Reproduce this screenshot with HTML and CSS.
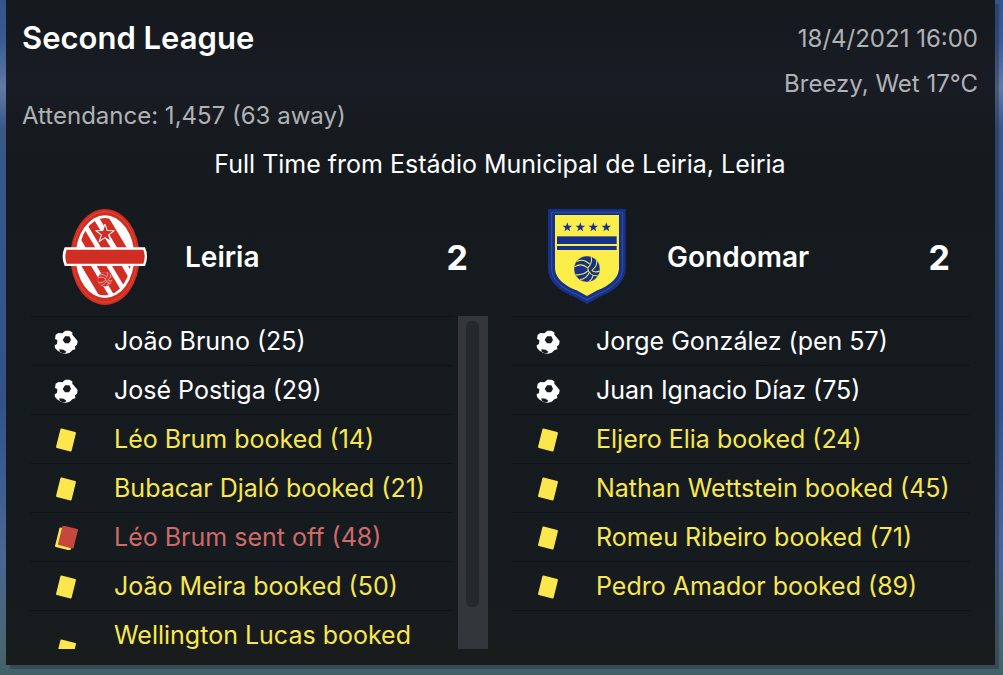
FILE: index.html
```html
<!DOCTYPE html>
<html lang="en">
<head>
  <meta charset="UTF-8">
  <meta name="viewport" content="width=device-width, initial-scale=1">
  <title>Leiria 2 - 2 Gondomar</title>
  <link rel="stylesheet" href="styles.css">
</head>
<body>

<!-- shared icons -->
<svg class="sprite" aria-hidden="true">
  <symbol id="goal" viewBox="0 0 72 72">
    <path fill="#fff" d="M5 14 L13 9 L25 10 L34 2 L46 2 L55 7 L55 14 L66 27 L71 34 L69 44 L63 49 L64 58 L56 60 L47 68 L36 71 L22 69 L11 62 L3 54 L2 46 L9 42 L10 30 L3 27 Z"/>
    <path fill="#171c20" d="M33 19 L46 19 L51 30 L45 40 L33 40 L26 30 Z"/>
    <path fill="#171c20" d="M16 58 L29 59 L37 65 L34 69 L24 69 L17 65 Z"/>
  </symbol>
  <symbol id="yellow" viewBox="0 0 24 24">
    <rect x="4" y="2" width="16" height="20" rx="1" fill="#fbe64d" transform="rotate(14 12 12)"/>
  </symbol>
  <symbol id="second-yellow" viewBox="0 0 24 24">
    <rect x="3" y="3" width="16" height="20" rx="1" fill="#f8e750" transform="rotate(14 11 13)"/>
    <rect x="6" y="1" width="16" height="20" rx="1" fill="#c4483e" transform="rotate(14 14 11)"/>
  </symbol>
  <symbol id="star" viewBox="-14 -14 28 28">
    <path d="M0 -14 L3.3 -4.5 L13.3 -4.3 L5.3 1.7 L8.2 11.3 L0 5.6 L-8.2 11.3 L-5.3 1.7 L-13.3 -4.3 L-3.3 -4.5 Z"/>
  </symbol>
  <symbol id="volleyball" viewBox="-40 -40 80 80">
    <circle r="38"/>
    <g fill="none" stroke-width="3">
      <path d="M2 -3 C-10 -14 -24 -14 -36 -7"/>
      <path d="M8 -14 C-4 -26 -18 -28 -29 -22"/>
      <path d="M2 -3 C12 -12 15 -24 12 -36"/>
      <path d="M14 4 C27 -5 30 -15 28 -25"/>
      <path d="M2 -3 C4 12 14 20 31 20"/>
      <path d="M14 4 C20 9 28 10 37 6"/>
      <path d="M3 5 C-6 15 -18 18 -33 17"/>
      <path d="M6 12 C0 24 -8 30 -20 31"/>
      <path d="M18 18 C16 28 12 33 5 37"/>
    </g>
  </symbol>
</svg>

<main class="match">
  <header class="match-header">
    <div>
      <h1>Second League</h1>
      <p class="attendance">Attendance: 1,457 (63 away)</p>
    </div>
    <div class="conditions">
      <p>18/4/2021 16:00</p>
      <p>Breezy, Wet 17°C</p>
    </div>
  </header>

  <p class="status">Full Time from Estádio Municipal de Leiria, Leiria</p>

  <div class="teams">
    <section class="team">
      <div class="team-header">
        <svg class="crest" viewBox="36 24 258 294" role="img" aria-label="Leiria crest">
          <clipPath id="oval"><ellipse cx="165" cy="170" rx="79" ry="116"/></clipPath>
          <ellipse cx="165" cy="171" rx="104" ry="144" fill="#d02d23"/>
          <ellipse cx="165" cy="171" rx="96" ry="136" fill="none" stroke="#e4593e" stroke-width="2"/>
          <ellipse cx="165" cy="170" rx="88" ry="124" fill="#fff"/>
          <g clip-path="url(#oval)" stroke="#d02d23" stroke-width="25">
            <path d="M2 20 L182 320"/>
            <path d="M48 20 L228 320"/>
            <path d="M94 20 L274 320"/>
            <path d="M142 20 L322 320"/>
          </g>
          <use href="#star" x="136" y="72" width="58" height="58" fill="#d02d23" stroke="#fff" stroke-width="1.5"/>
          <use href="#volleyball" x="142" y="215" width="46" height="46" fill="#d02d23" stroke="#fff"/>
          <path d="M44 142 H285 Q297 170 285 198 H44 Q32 170 44 142 Z" fill="#fff"/>
          <path d="M50 149 H280 Q288 170 280 191 H50 Q42 170 50 149 Z" fill="#d02d23"/>
        </svg>
        <h2>Leiria</h2>
        <span class="score">2</span>
      </div>
      <div class="scroller">
        <ul class="events">
          <li><svg><use href="#goal"/></svg><span>João Bruno (25)</span></li>
          <li><svg><use href="#goal"/></svg><span>José Postiga (29)</span></li>
          <li class="booked"><svg><use href="#yellow"/></svg><span>Léo Brum booked (14)</span></li>
          <li class="booked"><svg><use href="#yellow"/></svg><span>Bubacar Djaló booked (21)</span></li>
          <li class="sent-off"><svg><use href="#second-yellow"/></svg><span>Léo Brum sent off (48)</span></li>
          <li class="booked"><svg><use href="#yellow"/></svg><span>João Meira booked (50)</span></li>
          <li class="booked"><svg><use href="#yellow"/></svg><span>Wellington Lucas booked (68)</span></li>
        </ul>
        <div class="scrollbar"><div class="thumb"></div></div>
      </div>
    </section>

    <section class="team">
      <div class="team-header">
        <svg class="crest" viewBox="30 24 258 294" role="img" aria-label="Gondomar crest">
          <path d="M42 27 H275 V205 C275 250 232 277 196 291 L159 312 L122 291 C86 277 42 250 42 205 Z" fill="#16318c"/>
          <path d="M53 37 H265 V205 C265 243 228 268 192 282 L159 300 L126 282 C90 268 53 243 53 205 Z" fill="none" stroke="#536394" stroke-width="2"/>
          <path d="M63 45 H255 V203 C255 237 222 258 190 271 L159 288 L128 271 C96 258 63 237 63 203 Z" fill="#fbee4b"/>
          <g fill="#16318c">
            <use href="#star" x="85" y="67" width="30" height="30"/>
            <use href="#star" x="124" y="67" width="30" height="30"/>
            <use href="#star" x="163" y="67" width="30" height="30"/>
            <use href="#star" x="202" y="67" width="30" height="30"/>
            <rect x="69" y="109" width="179" height="23"/>
            <rect x="69" y="138" width="179" height="12"/>
          </g>
          <use href="#volleyball" x="118" y="166" width="82" height="82" fill="#16318c" stroke="#fbee4b"/>
        </svg>
        <h2>Gondomar</h2>
        <span class="score">2</span>
      </div>
      <div class="scroller">
        <ul class="events">
          <li><svg><use href="#goal"/></svg><span>Jorge González (pen 57)</span></li>
          <li><svg><use href="#goal"/></svg><span>Juan Ignacio Díaz (75)</span></li>
          <li class="booked"><svg><use href="#yellow"/></svg><span>Eljero Elia booked (24)</span></li>
          <li class="booked"><svg><use href="#yellow"/></svg><span>Nathan Wettstein booked (45)</span></li>
          <li class="booked"><svg><use href="#yellow"/></svg><span>Romeu Ribeiro booked (71)</span></li>
          <li class="booked"><svg><use href="#yellow"/></svg><span>Pedro Amador booked (89)</span></li>
        </ul>
      </div>
    </section>
  </div>
</main>

</body>
</html>
```

FILE: styles.css
```css
* {
  box-sizing: border-box;
}

body {
  margin: 0;
  height: 100vh;
  padding: 0 8px 10px 6px;
  display: flex;
  font: 25px/31px Inter, "Open Sans", sans-serif;
  color: #fff;
  background: linear-gradient(to bottom, #34548c 0, #3a5a92 6%, #627aa4 13%, #3a5788 19%, #34528a 60%, #4b6695 82%, #48656f 96%, #426068 100%);
}

h1, h2, p, ul {
  margin: 0;
  padding: 0;
}

.sprite {
  position: absolute;
  width: 0;
  height: 0;
}

.match {
  flex: 1;
  min-width: 0;
  display: flex;
  flex-direction: column;
  padding: 16px 25px 16px 24px;
  background: linear-gradient(to bottom, #14191e 0, #191c24 12%, #151a1e 24%, #161b20 85%, #191c1c 100%);
  box-shadow: 4px 4px 0 rgba(30, 35, 50, 0.35);
}

.match-header {
  display: flex;
  justify-content: space-between;
  margin: 0 -8px;
  font-size: 24px;
  color: #b0b2b4;
}

h1 {
  font-size: 31px;
  line-height: 44px;
  font-weight: 600;
  color: #fff;
}

.attendance {
  margin-top: 40px;
}

.conditions {
  text-align: right;
  line-height: 45px;
}

.status {
  margin: 18px 0 20px;
  text-align: center;
}

.teams {
  flex: 1;
  min-height: 0;
  display: grid;
  grid-template-columns: 1fr 1fr;
  gap: 24px;
}

.team {
  display: flex;
  flex-direction: column;
  min-height: 0;
}

.team-header {
  display: flex;
  align-items: center;
  height: 116px;
  padding: 0 20px 2px 32px;
}

.crest {
  width: 86px;
  height: 98px;
  margin-right: 37px;
}

h2 {
  flex: 1;
  font-size: 28px;
  font-weight: 600;
}

.score {
  font-size: 34px;
  font-weight: 700;
}

.scroller {
  flex: 1;
  min-height: 0;
  display: flex;
  gap: 6px;
  overflow: hidden;
}

.events {
  flex: 1;
  list-style: none;
}

.events li {
  display: flex;
  align-items: center;
  gap: 36px;
  padding: 9px 16px 8px 24px;
  border-top: 1px solid #10141a;
}

.events li:last-child {
  border-bottom: 1px solid #10141a;
}

.events svg {
  flex: none;
  width: 24px;
  height: 24px;
}

.events .booked {
  color: #f8e750;
}

.events .sent-off {
  color: #cf6a68;
}

.scrollbar {
  width: 30px;
  padding: 5px 9px 42px 8px;
  background: #33363a;
}

.thumb {
  height: 100%;
  border-radius: 6px;
  background: #25282c;
}
```
